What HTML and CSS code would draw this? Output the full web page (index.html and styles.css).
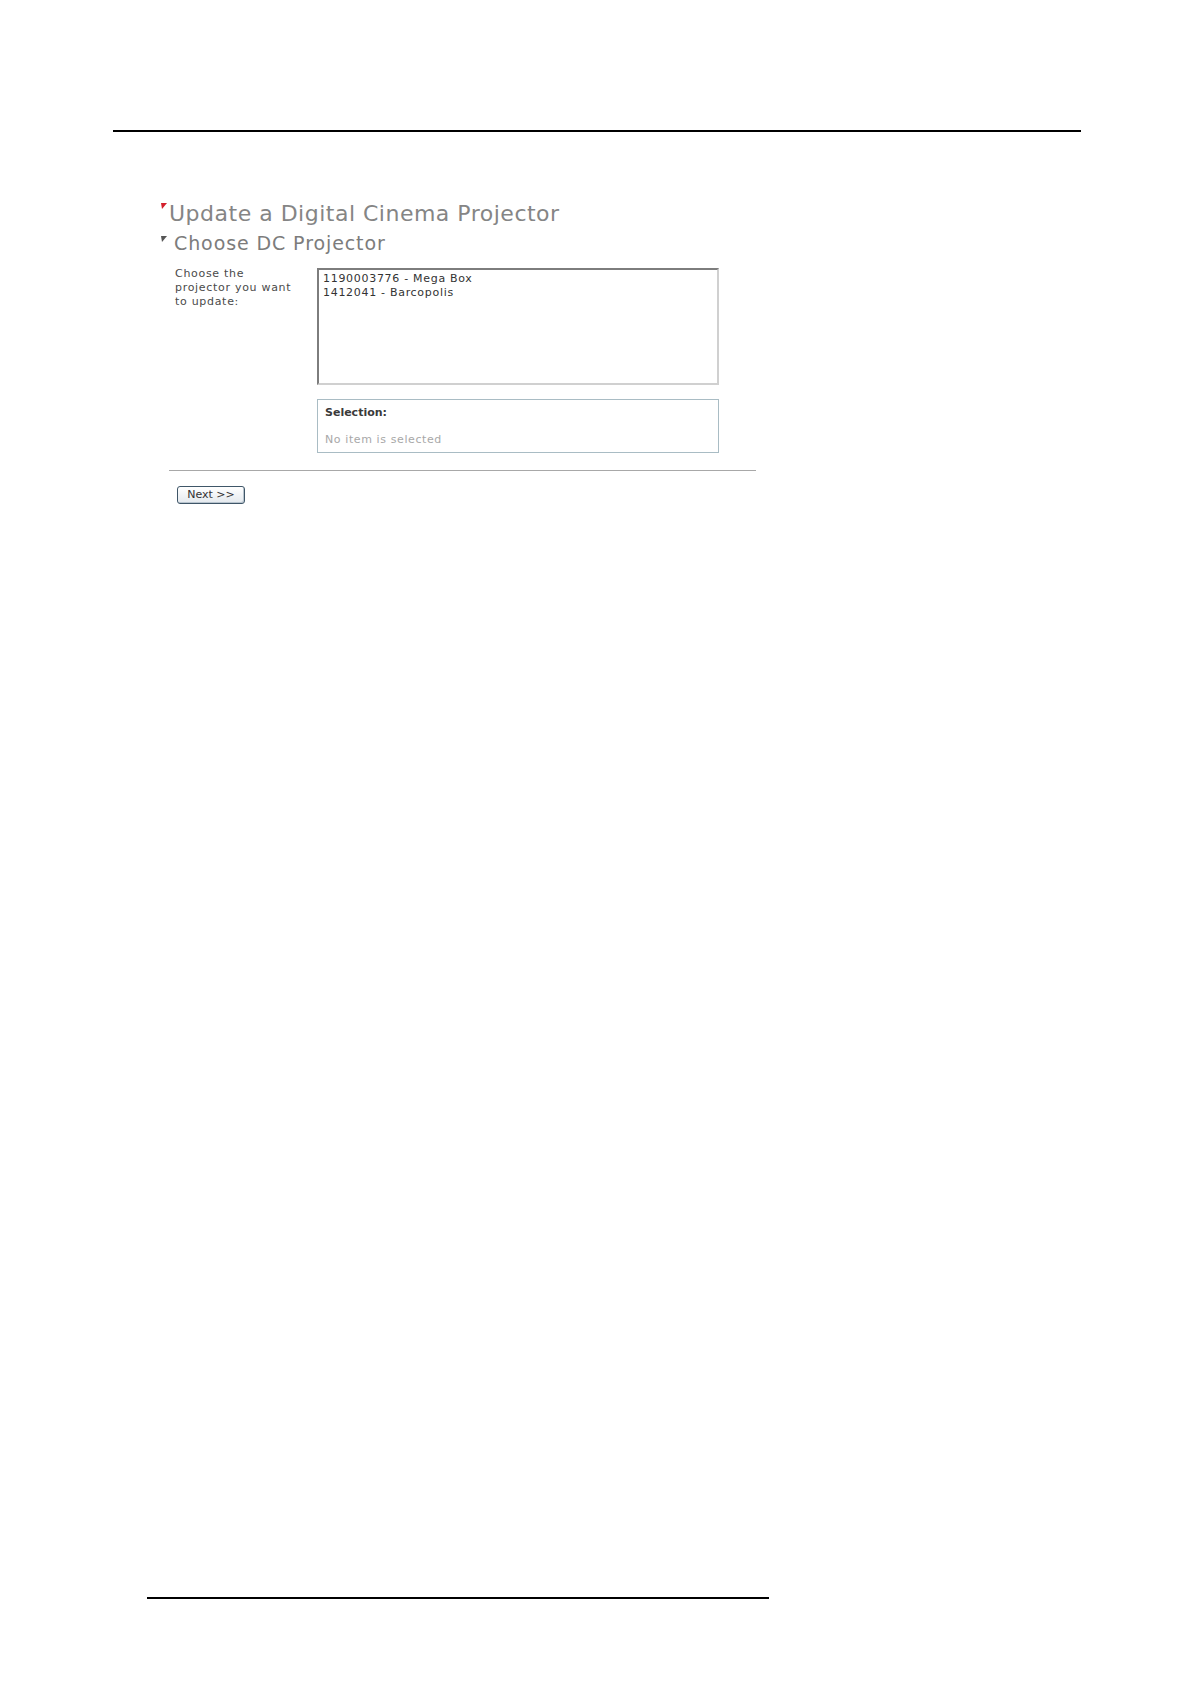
FILE: index.html
```html
<!DOCTYPE html>
<html>
<head>
<meta charset="utf-8">
<title>Update a Digital Cinema Projector</title>
<link rel="stylesheet" href="styles.css">
</head>
<body>
<div class="page">
  <div class="header-rule"></div>
  <main class="content">
    <h1 class="title"><svg class="mark" width="6" height="6" viewBox="0 0 6 6"><polygon points="0,0 6,0 1,6" fill="#d4202c"/></svg>Update a Digital Cinema Projector</h1>
    <h2 class="subtitle"><svg class="mark" width="6" height="6" viewBox="0 0 6 6"><polygon points="0,0 6,0 1,6" fill="#555"/></svg>Choose DC Projector</h2>
    <div class="form-row">
      <div class="label">Choose the<br>projector you want<br>to update:</div>
      <div class="fields">
        <div class="listbox">
          <div class="option">1190003776 - Mega Box</div>
          <div class="option">1412041 - Barcopolis</div>
        </div>
        <div class="selection">
          <div class="sel-title">Selection:</div>
          <div class="sel-empty">No item is selected</div>
        </div>
      </div>
    </div>
    <div class="sep"></div>
    <div class="actions">
      <button class="btn" type="button">Next &gt;&gt;</button>
    </div>
  </main>
  <div class="footer-rule"></div>
</div>
</body>
</html>
```
FILE: styles.css
```css
html, body {
  margin: 0;
  padding: 0;
  background: #ffffff;
}
body {
  font-family: "DejaVu Sans", Verdana, sans-serif;
}
.page {
  display: flex;
  flex-direction: column;
  height: 1684px;
  box-sizing: border-box;
  padding-top: 130px;
}
.header-rule {
  margin-left: 113px;
  width: 968px;
  height: 2px;
  background: #000;
}
.content {
  display: flex;
  flex-direction: column;
  padding-left: 161px;
  padding-top: 69px;
}
.title {
  margin: 0;
  font-size: 22px;
  font-weight: normal;
  line-height: 26px;
  color: #858585;
  display: flex;
  align-items: flex-start;
  letter-spacing: 0.5px;
}
.title .mark {
  margin-top: 2px;
  margin-right: 2px;
  flex: none;
}
.subtitle {
  margin: 5px 0 0 0;
  font-size: 19px;
  font-weight: normal;
  line-height: 22px;
  color: #7c7c7c;
  display: flex;
  align-items: flex-start;
  letter-spacing: 0.9px;
}
.subtitle .mark {
  margin-top: 4px;
  margin-right: 7px;
  flex: none;
}
.form-row {
  display: flex;
  margin-top: 13px;
  margin-left: 14px;
}
.label {
  width: 142px;
  flex: none;
  font-size: 11px;
  line-height: 14px;
  color: #4a4a4a;
  letter-spacing: 0.7px;
}
.fields {
  display: flex;
  flex-direction: column;
  gap: 14px;
  margin-top: 1px;
}
.listbox {
  width: 402px;
  height: 117px;
  box-sizing: border-box;
  border: 2px solid;
  border-color: #7d7d7d #d0d0d0 #d0d0d0 #7d7d7d;
  padding: 2px 4px;
  font-size: 11px;
  line-height: 14px;
  color: #333;
  letter-spacing: 0.7px;
}
.selection {
  width: 402px;
  height: 54px;
  box-sizing: border-box;
  border: 1px solid #a9bcc4;
  padding: 6px 8px 0 7px;
  font-size: 11px;
  line-height: 14px;
}
.sel-title {
  font-weight: bold;
  color: #3a3a3a;
}
.sel-empty {
  margin-top: 13px;
  color: #a8a8a8;
  letter-spacing: 0.6px;
}
.sep {
  margin-top: 17px;
  margin-left: 8px;
  width: 587px;
  height: 1px;
  background: #a8a8a8;
}
.actions {
  display: flex;
  margin-top: 15px;
  margin-left: 16px;
}
.btn {
  width: 68px;
  height: 18px;
  padding: 0;
  box-sizing: border-box;
  border: 1px solid #3f5668;
  border-radius: 3px;
  background: linear-gradient(#ffffff, #e4e9ee);
  font-family: "DejaVu Sans", Verdana, sans-serif;
  font-size: 11px;
  line-height: 14px;
  color: #333;
  box-shadow: inset -1px -1px 0 #b8c4ce;
}
.footer-rule {
  margin-top: auto;
  margin-bottom: 85px;
  margin-left: 147px;
  width: 622px;
  height: 2px;
  background: #000;
}
```
